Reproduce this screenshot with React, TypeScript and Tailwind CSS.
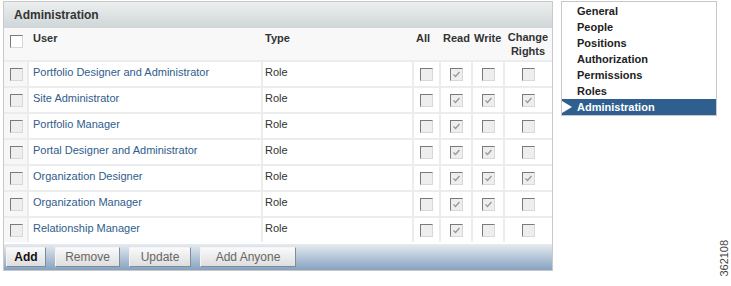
const rows = [
  { name: "Portfolio Designer and Administrator", read: true, write: false, change: false },
  { name: "Site Administrator", read: true, write: true, change: true },
  { name: "Portfolio Manager", read: true, write: false, change: false },
  { name: "Portal Designer and Administrator", read: true, write: true, change: false },
  { name: "Organization Designer", read: true, write: true, change: true },
  { name: "Organization Manager", read: true, write: true, change: false },
  { name: "Relationship Manager", read: true, write: false, change: false },
];

const nav = ["General", "People", "Positions", "Authorization", "Permissions", "Roles", "Administration"];

function Box({ checked = false, dark = false }: { checked?: boolean; dark?: boolean }) {
  return (
    <span
      className={`inline-flex h-[13px] w-[13px] items-center justify-center border border-t-[#7a7a7a] border-l-[#7a7a7a] border-r-[#d8d8d8] border-b-[#d8d8d8] ${
        dark ? "bg-white" : "bg-[#eeeeee]"
      }`}
    >
      {checked && (
        <svg width="9" height="9" viewBox="0 0 9 9">
          <path d="M1.5 4.5 L3.5 6.5 L7.5 2" fill="none" stroke="#9a9a9a" strokeWidth="1.4" />
        </svg>
      )}
    </span>
  );
}

function Btn({ label, bold = false, w }: { label: string; bold?: boolean; w: string }) {
  return (
    <button
      className={`${w} h-[20px] border border-t-[#f4f4f4] border-l-[#f4f4f4] border-r-[#7d8d9d] border-b-[#7d8d9d] bg-gradient-to-b from-[#fafafa] to-[#dedede] text-[12px] leading-none ${
        bold ? "font-bold text-[#111]" : "text-[#666]"
      }`}
    >
      {label}
    </button>
  );
}

export default function App() {
  return (
    <div className="relative h-[286px] w-[731px] bg-white font-['Liberation_Sans',Arial,sans-serif] text-[11px]">
      <div className="flex items-start gap-[8px] pl-[3px] pt-[1px]">
        {/* Main panel */}
        <div className="w-[550px] border border-[#c8c8c8]">
          <div className="flex h-[26px] items-center bg-gradient-to-b from-[#eceff0] to-[#cfd6d7] pl-[10px] text-[12px] font-bold text-[#333]">
            Administration
          </div>
          <div className="flex h-[32px] bg-[#f8f8f8] pt-[1px] font-bold text-[#333]">
            <div className="w-[25px] pl-[6px] pt-[6px]">
              <Box dark />
            </div>
            <div className="w-[234px] pl-[4px] pt-[1px]">User</div>
            <div className="w-[151px] pl-[2px] pt-[1px]">Type</div>
            <div className="w-[27px] pl-[2px] pt-[1px]">All</div>
            <div className="w-[31px] pl-[2px] pt-[1px]">Read</div>
            <div className="w-[32px] pl-[2px] pt-[1px]">Write</div>
            <div className="flex-1 pt-[1px] text-center leading-[14px]">
              Change
              <br />
              Rights
            </div>
          </div>
          <div className="bg-[#ececec] pt-[2px]">
            {rows.map((r) => (
              <div key={r.name} className="mb-[2px] flex h-[24px] gap-[2px] text-[#333]">
                <div className="flex w-[23px] items-center pl-[6px] bg-[#f7f7f7]">
                  <Box />
                </div>
                <div className="flex w-[232px] items-center bg-white pl-[4px] pb-[4px] text-[#2f5d8c]">{r.name}</div>
                <div className="flex w-[149px] items-center bg-white pl-[2px] pb-[4px]">Role</div>
                <div className="flex w-[25px] items-center justify-center bg-white">
                  <Box />
                </div>
                <div className="flex w-[30px] items-center justify-center bg-white">
                  <Box checked={r.read} />
                </div>
                <div className="flex w-[30px] items-center justify-center bg-white">
                  <Box checked={r.write} />
                </div>
                <div className="flex flex-1 items-center justify-center bg-white">
                  <Box checked={r.change} />
                </div>
              </div>
            ))}
          </div>
          <div className="flex h-[26px] items-center gap-[9px] bg-gradient-to-b from-[#e6ebf0] to-[#86a2c0] pl-[2px]">
            <Btn label="Add" bold w="w-[40px]" />
            <Btn label="Remove" w="w-[65px]" />
            <Btn label="Update" w="w-[62px]" />
            <Btn label="Add Anyone" w="w-[96px]" />
          </div>
        </div>

        {/* Side nav */}
        <div className="w-[156px] border border-[#c8c8c8] pt-[1px] text-[11px] font-bold text-[#222]">
          {nav.map((n) => (
            <div
              key={n}
              className={`relative flex h-[16px] items-center pl-[15px] ${
                n === "Administration" ? "bg-[#2f5f8e] text-white" : ""
              }`}
            >
              {n === "Administration" && (
                <span className="absolute left-0 top-[2px] h-0 w-0 border-y-[6px] border-l-[10px] border-y-transparent border-l-white" />
              )}
              {n}
            </div>
          ))}
        </div>
      </div>

      <div className="absolute left-[718px] top-[234px] flex h-[48px] w-[12px] items-center justify-center">
        <span className="-rotate-90 whitespace-nowrap text-[11px] text-[#444]">362108</span>
      </div>
    </div>
  );
}
